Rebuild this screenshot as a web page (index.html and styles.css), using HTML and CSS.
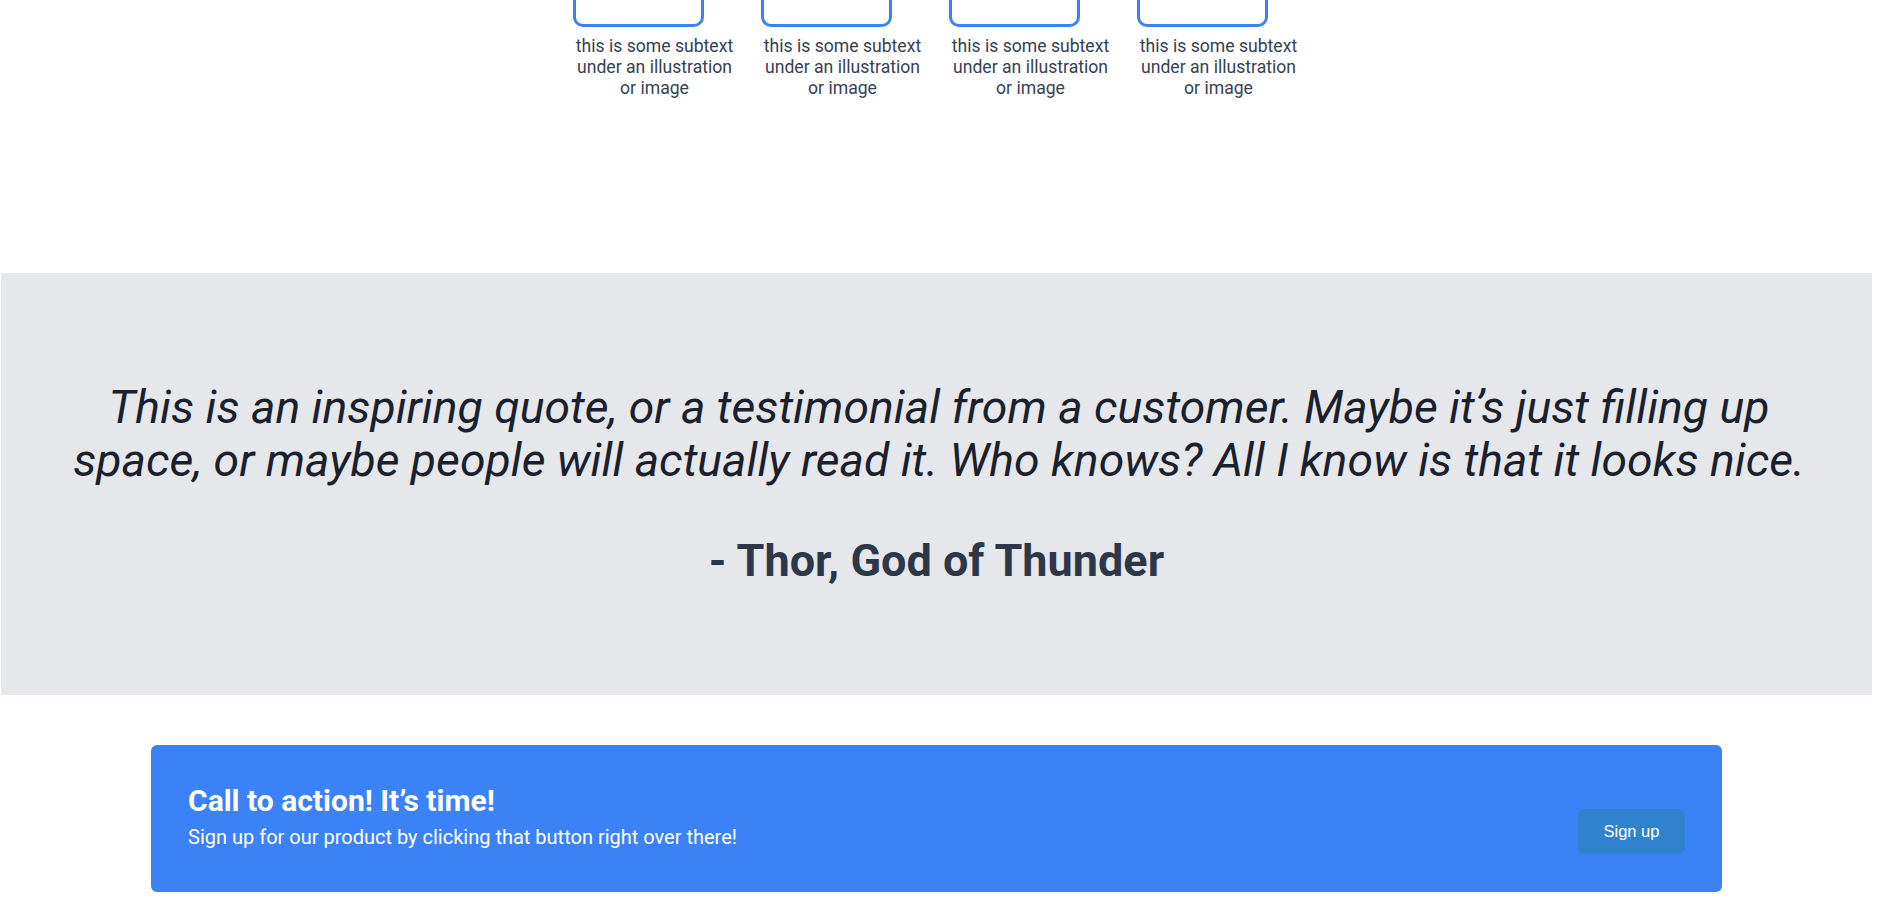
FILE: index.html
```html
<!DOCTYPE html>
<html lang="en">
<head>
<meta charset="utf-8">
<title>Landing</title>
<link rel="stylesheet" href="styles.css">
</head>
<body>
<div class="page">
  <section class="features">
    <div class="feature">
      <div class="illus"></div>
      <p class="feature-text">this is some subtext under an illustration or image</p>
    </div>
    <div class="feature">
      <div class="illus"></div>
      <p class="feature-text">this is some subtext under an illustration or image</p>
    </div>
    <div class="feature">
      <div class="illus"></div>
      <p class="feature-text">this is some subtext under an illustration or image</p>
    </div>
    <div class="feature">
      <div class="illus"></div>
      <p class="feature-text">this is some subtext under an illustration or image</p>
    </div>
  </section>

  <section class="quote">
    <blockquote class="quote-text">This is an inspiring quote, or a testimonial from a customer. Maybe it’s just filling up space, or maybe people will actually read it. Who knows? All I know is that it looks nice.</blockquote>
    <p class="author">- Thor, God of Thunder</p>
  </section>

  <section class="cta">
    <div class="cta-text">
      <h2 class="cta-title">Call to action! It’s time!</h2>
      <p class="cta-sub">Sign up for our product by clicking that button right over there!</p>
    </div>
    <button class="cta-button">Sign up</button>
  </section>
</div>
</body>
</html>
```

FILE: styles.css
```css
html, body {
  margin: 0;
  padding: 0;
  background: #ffffff;
}

body {
  font-family: Roboto, "Liberation Sans", sans-serif;
  overflow: hidden;
}

.page {
  width: 1873px;
}

.features {
  display: flex;
  justify-content: center;
  gap: 25px;
  margin-top: -104px;
}

.feature {
  width: 163px;
}

.illus {
  width: 131px;
  height: 131px;
  box-sizing: border-box;
  border: 3px solid #3b82f6;
  border-radius: 10px;
}

.feature-text {
  margin: 9px 0 0;
  font-size: 17.6px;
  line-height: 21px;
  text-align: center;
  color: #374151;
}

.quote {
  margin: 174px 1px 0;
  background: #e5e7eb;
  padding: 108px 0 108px;
  text-align: center;
}

.quote-text {
  margin: 0 auto;
  max-width: 1760px;
  padding-left: 5px;
  font-size: 46.3px;
  font-style: italic;
  line-height: 53px;
  color: #1a202c;
}

.author {
  margin: 47px 0 0;
  font-size: 45px;
  font-weight: 700;
  line-height: 53px;
  color: #2d3748;
}

.cta {
  width: 1571px;
  box-sizing: border-box;
  margin: 50px auto 0;
  padding: 38px 37px 43px;
  background: #3b82f6;
  border-radius: 6px;
  display: flex;
  justify-content: space-between;
  align-items: center;
  color: #ffffff;
}

.cta-title {
  margin: 0 0 7px;
  font-size: 30px;
  font-weight: 700;
  line-height: 36px;
}

.cta-sub {
  margin: 0;
  font-size: 20px;
  line-height: 23px;
}

.cta-button {
  width: 107px;
  height: 45px;
  margin: 15.5px 0 -15.5px;
  border: none;
  border-radius: 6px;
  background: #3182ce;
  color: #ffffff;
  font-family: "Liberation Sans", Arial, sans-serif;
  font-size: 16.5px;
}
```
